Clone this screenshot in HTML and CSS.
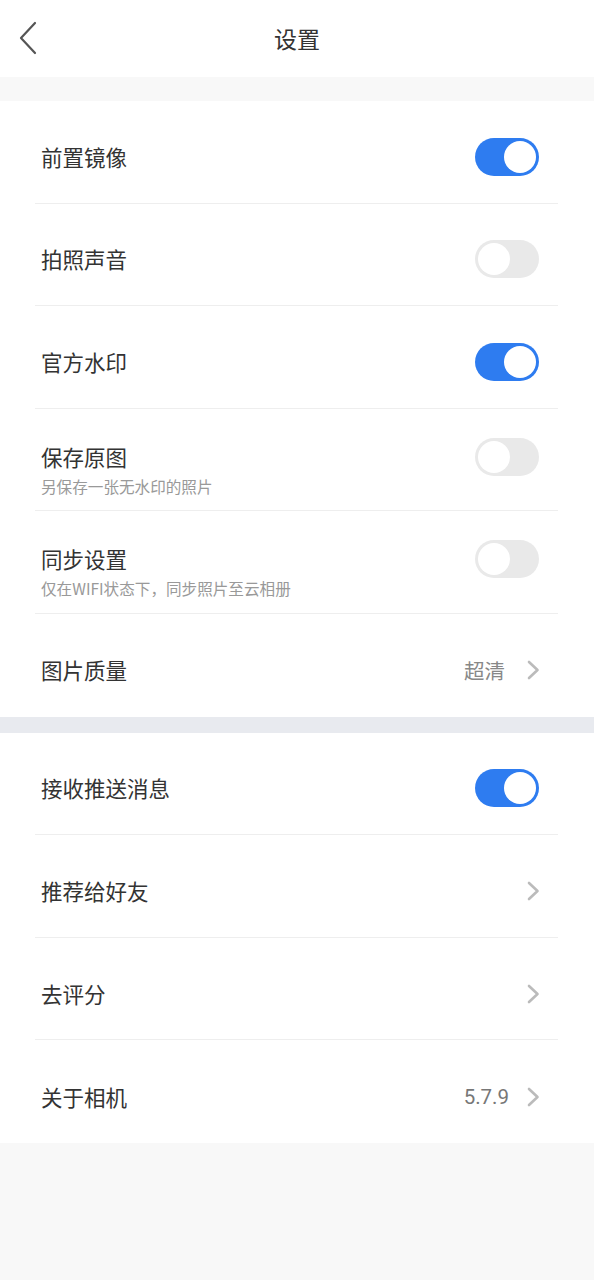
FILE: index.html
```html
<!DOCTYPE html>
<html lang="zh">
<head>
<meta charset="utf-8">
<link rel="stylesheet" href="styles.css">
</head>
<body>
<header class="topbar">
  <svg class="back" width="18" height="34" viewBox="0 0 18 34"><path d="M16 2 L2 17 L16 32" fill="none" stroke="#555" stroke-width="2.2" stroke-linecap="round" stroke-linejoin="round"/></svg>
  <h1 class="title">设置</h1>
</header>
<div class="gap"></div>
<section class="group">
  <div class="row"><div class="label">前置镜像</div><span class="switch on"></span></div>
  <div class="row"><div class="label">拍照声音</div><span class="switch"></span></div>
  <div class="row"><div class="label">官方水印</div><span class="switch on"></span></div>
  <div class="row sub"><div class="text"><div class="label">保存原图</div><div class="desc">另保存一张无水印的照片</div></div><span class="switch"></span></div>
  <div class="row sub"><div class="text"><div class="label">同步设置</div><div class="desc">仅在WIFI状态下，同步照片至云相册</div></div><span class="switch"></span></div>
  <div class="row"><div class="label">图片质量</div><div class="value">超清<svg class="chev" width="13" height="20" viewBox="0 0 13 20"><path d="M2 2 L10.5 10 L2 18" fill="none" stroke="#bbb" stroke-width="2.6" stroke-linecap="round" stroke-linejoin="round"/></svg></div></div>
</section>
<div class="sep"></div>
<section class="group">
  <div class="row"><div class="label">接收推送消息</div><span class="switch on"></span></div>
  <div class="row"><div class="label">推荐给好友</div><div class="value"><svg class="chev" width="13" height="20" viewBox="0 0 13 20"><path d="M2 2 L10.5 10 L2 18" fill="none" stroke="#bbb" stroke-width="2.6" stroke-linecap="round" stroke-linejoin="round"/></svg></div></div>
  <div class="row"><div class="label">去评分</div><div class="value"><svg class="chev" width="13" height="20" viewBox="0 0 13 20"><path d="M2 2 L10.5 10 L2 18" fill="none" stroke="#bbb" stroke-width="2.6" stroke-linecap="round" stroke-linejoin="round"/></svg></div></div>
  <div class="row"><div class="label">关于相机</div><div class="value version">5.7.9<svg class="chev" width="13" height="20" viewBox="0 0 13 20"><path d="M2 2 L10.5 10 L2 18" fill="none" stroke="#bbb" stroke-width="2.6" stroke-linecap="round" stroke-linejoin="round"/></svg></div></div>
</section>
</body>
</html>
```
FILE: styles.css
```css
html, body {
  margin: 0;
  padding: 0;
}
body {
  background: #f8f8f8;
  font-family: "Noto Sans CJK SC", "Noto Sans", sans-serif;
  color: #333;
}
.topbar {
  height: 77px;
  background: #fff;
  display: flex;
  align-items: center;
  justify-content: center;
  position: relative;
}
.back {
  position: absolute;
  left: 19px;
  top: 21px;
}
.title {
  margin: 0;
  font-size: 23px;
  font-weight: 400;
  color: #333;
  line-height: 30px;
  margin-top: -2px;
}
.gap {
  height: 24px;
  background: #f8f8f8;
}
.sep {
  height: 16px;
  background: #e8eaef;
}
.group {
  background: #fff;
  padding: 0 36px 0 35px;
}
.row {
  height: 102.6px;
  box-sizing: border-box;
  border-bottom: 1px solid #eeeeee;
  display: flex;
  align-items: center;
  justify-content: space-between;
  padding: 10px 19px 0 6px;
}
.row:last-child {
  border-bottom: none;
}
.row.sub {
  align-items: flex-start;
  padding-top: 29px;
}
.label {
  font-size: 21.5px;
  line-height: 30px;
  color: #333;
}
.row.sub .label {
  line-height: 38px;
}
.desc {
  font-size: 15.6px;
  line-height: 20px;
  color: #999;
}
.value {
  display: flex;
  align-items: center;
  font-size: 20.5px;
  color: #888;
}
.value.version {
  font-family: Roboto, "Noto Sans CJK SC", sans-serif;
  color: #777;
}
.value.version .chev {
  margin-left: 18px;
}
.chev {
  margin-left: 22px;
  margin-right: -1px;
}
.switch {
  width: 64px;
  height: 38px;
  border-radius: 19px;
  background: #e9e9e9;
  position: relative;
  box-sizing: border-box;
  flex: none;
}
.switch::after {
  content: "";
  position: absolute;
  top: 3px;
  left: 3px;
  width: 32px;
  height: 32px;
  border-radius: 50%;
  background: #fff;
}
.switch.on {
  background: #2e7cf0;
}
.switch.on::after {
  left: 29px;
}
```
